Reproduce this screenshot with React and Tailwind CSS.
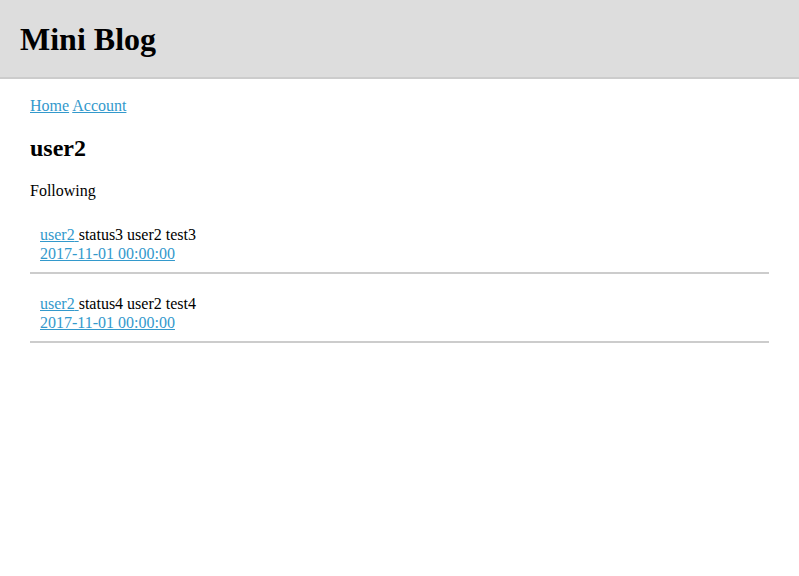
const posts = [
  { user: 'user2', text: 'status3 user2 test3', date: '2017-11-01 00:00:00' },
  { user: 'user2', text: 'status4 user2 test4', date: '2017-11-01 00:00:00' },
];

export default function App() {
  return (
    <div className="min-h-[576px] bg-white text-black text-[16px] font-['Liberation_Serif',serif]">
      {/* Header */}
      <div className="h-[79px] bg-[#dddddd] border-b-2 border-[#cccccc] flex items-center px-[20px]">
        <h1 className="text-[32px] font-bold leading-[37px] mt-[2px]">Mini Blog</h1>
      </div>

      <div className="mx-[30px]">
        <div className="pt-[18px] leading-[18px]">
          <a href="#" className="text-[#3399cc] underline">Home</a>{' '}
          <a href="#" className="text-[#3399cc] underline">Account</a>
        </div>
        <h2 className="text-[24px] font-bold leading-[27px] mt-[20px]">user2</h2>
        <p className="mt-[20px] leading-[18px]">Following</p>

        <div className="mt-[16px]">
          {posts.map((p, i) => (
            <div key={i} className={`border-b-2 border-[#cccccc] px-[10px] pt-[9px] pb-[9px] leading-[19px] ${i > 0 ? 'mt-[11px]' : ''}`}>
              <div>
                <a href="#" className="text-[#3399cc] underline">{p.user} </a>
                {p.text}
              </div>
              <div>
                <a href="#" className="text-[#3399cc] underline">{p.date}</a>
              </div>
            </div>
          ))}
        </div>
      </div>
    </div>
  );
}
